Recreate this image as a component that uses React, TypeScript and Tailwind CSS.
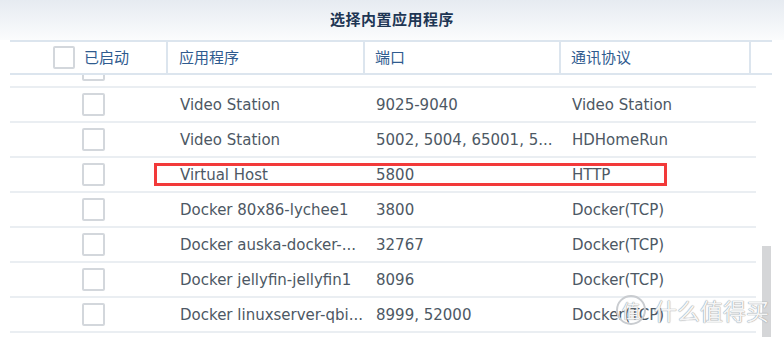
const rows = [
  { app: "", port: "", proto: "" },
  { app: "Video Station", port: "9025-9040", proto: "Video Station" },
  { app: "Video Station", port: "5002, 5004, 65001, 5...", proto: "HDHomeRun" },
  { app: "Virtual Host", port: "5800", proto: "HTTP" },
  { app: "Docker 80x86-lychee1", port: "3800", proto: "Docker(TCP)" },
  { app: "Docker auska-docker-...", port: "32767", proto: "Docker(TCP)" },
  { app: "Docker jellyfin-jellyfin1", port: "8096", proto: "Docker(TCP)" },
  { app: "Docker linuxserver-qbi...", port: "8999, 52000", proto: "Docker(TCP)" },
];

const Box = () => (
  <div className="w-[23px] h-[23px] border-2 border-[#d3d7dc] rounded-[2px] bg-white" />
);

export default function App() {
  return (
    <div
      className="relative w-[784px] h-[337px] overflow-hidden bg-white"
      style={{ fontFamily: '"DejaVu Sans", "Noto Sans CJK SC", sans-serif' }}
    >
      {/* title bar */}
      <div className="h-[40px] flex items-center justify-center bg-gradient-to-b from-[#e6ebf1] to-[#fbfcfd]">
        <span
          className="text-[15px] font-bold text-[#1e3654] tracking-[0.5px] -mt-[2px]"
          style={{ fontFamily: '"Noto Sans CJK SC", sans-serif' }}
        >
          选择内置应用程序
        </span>
      </div>

      {/* column header */}
      <div
        className="ml-[10px] w-[762px] h-[35px] flex border-t-2 border-b-2 border-[#dce5ee] text-[15px] text-[#2f5b8f]"
        style={{ fontFamily: '"Noto Sans CJK SC", sans-serif' }}
      >
        <div className="w-[158px] flex items-center pl-[43px] gap-[9px] border-r-2 border-[#dce5ee]">
          <div className="w-[22px] h-[23px] border-2 border-[#d3d7dc] rounded-[2px]" />
          <span>已启动</span>
        </div>
        <div className="w-[197px] flex items-center pl-[11px] border-r-2 border-[#dce5ee]">应用程序</div>
        <div className="w-[196px] flex items-center pl-[10px] border-r-2 border-[#dce5ee]">端口</div>
        <div className="w-[190px] flex items-center pl-[10px] border-r-2 border-[#dce5ee]">通讯协议</div>
        <div className="flex-1" />
      </div>

      {/* body */}
      <div className="flex">
        <div className="ml-[10px] w-[746px] h-[262px] overflow-hidden">
          <div className="-mt-[22px]">
            {rows.map((r, i) => (
              <div
                key={i}
                className="h-[35px] flex items-center border-b-2 border-[#eaeef2] text-[15px] text-[#4d5864]"
              >
                <div className="w-[158px] flex items-center pl-[72px]">
                  <Box />
                </div>
                <div className="w-[197px] pl-[12px] pt-[2px] whitespace-nowrap">{r.app}</div>
                <div className="w-[196px] pl-[11px] pt-[2px] whitespace-nowrap">{r.port}</div>
                <div className="w-[190px] pl-[11px] pt-[2px] whitespace-nowrap">{r.proto}</div>
              </div>
            ))}
          </div>
        </div>
        <div className="ml-[6px] w-[9px] h-[262px] flex flex-col justify-end">
          <div className="h-[91px] bg-[#d5d6d8]" />
        </div>
      </div>

      {/* red annotation box */}
      <div className="absolute left-[154px] top-[163px] w-[513px] h-[23px] border-[3px] border-[#f23a3a]" />

      {/* watermark */}
      <div
        className="absolute left-[616px] top-[295px] flex items-center gap-[8px] text-white/90"
        style={{
          fontFamily: '"Noto Sans CJK SC", sans-serif',
          textShadow: "0 0 1px #8f959b, 0 0 1px #8f959b",
        }}
      >
        <div className="w-[30px] h-[30px] rounded-full border-2 border-[#c9ccd0] flex items-center justify-center text-[18px]">
          值
        </div>
        <span className="text-[23px] leading-none">什么值得买</span>
      </div>
    </div>
  );
}
